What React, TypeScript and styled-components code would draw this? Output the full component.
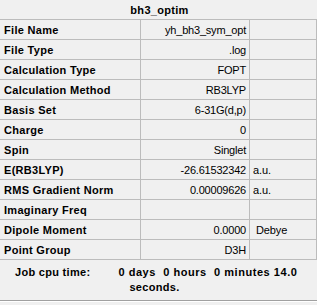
import styled, { createGlobalStyle } from 'styled-components'

const GlobalStyle = createGlobalStyle`
  html, body {
    margin: 0;
    padding: 0;
    background: #f0f0f0;
  }
`

type Row = { label: string; value: string; unit?: string }

const rows: Row[] = [
  { label: 'File Name', value: 'yh_bh3_sym_opt' },
  { label: 'File Type', value: '.log' },
  { label: 'Calculation Type', value: 'FOPT' },
  { label: 'Calculation Method', value: 'RB3LYP' },
  { label: 'Basis Set', value: '6-31G(d,p)' },
  { label: 'Charge', value: '0' },
  { label: 'Spin', value: 'Singlet' },
  { label: 'E(RB3LYP)', value: '-26.61532342', unit: 'a.u.' },
  { label: 'RMS Gradient Norm', value: '0.00009626', unit: 'a.u.' },
  { label: 'Imaginary Freq', value: '' },
  { label: 'Dipole Moment', value: '0.0000', unit: ' Debye' },
  { label: 'Point Group', value: 'D3H' },
]

export default function App() {
  return (
    <Panel>
      <GlobalStyle />
      <Title>bh3_optim</Title>

      {/* Summary table */}
      {rows.map((r) => (
        <TableRow key={r.label}>
          <Label>{r.label}</Label>
          <Value>{r.value}</Value>
          <Unit>{r.unit}</Unit>
        </TableRow>
      ))}

      {/* Job timing */}
      <Footer>
        <FooterLine>
          <span>Job cpu time:</span>
          <Duration>0 days  0 hours  0 minutes 14.0</Duration>
        </FooterLine>
        <FooterWrap>seconds.</FooterWrap>
      </Footer>
    </Panel>
  )
}

const Panel = styled.div`
  width: 317px;
  height: 305px;
  background: #f0f0f0;
  font-family: 'Liberation Sans', Arial, sans-serif;
  font-size: 11px;
  color: #000;
  overflow: hidden;
`

const Title = styled.div`
  box-sizing: border-box;
  height: 20px;
  border-bottom: 1px solid #bcbcbc;
  display: flex;
  align-items: center;
  justify-content: center;
  font-weight: bold;
  letter-spacing: 0.3px;
  padding-left: 2px;
`

const TableRow = styled.div`
  box-sizing: border-box;
  height: 20px;
  display: grid;
  grid-template-columns: 141px 109px 67px;
  border-bottom: 1px solid #bcbcbc;
`

const Cell = styled.div`
  box-sizing: border-box;
  display: flex;
  align-items: center;
  border-right: 1px solid #bcbcbc;
  white-space: pre;
  overflow: hidden;
`

const Label = styled(Cell)`
  padding-left: 4px;
  font-weight: bold;
  letter-spacing: 0.3px;
`

const Value = styled(Cell)`
  justify-content: flex-end;
  padding-right: 3px;
  letter-spacing: -0.2px;
`

const Unit = styled(Cell)`
  padding-left: 3px;
  letter-spacing: -0.1px;
`

const Footer = styled.div`
  box-sizing: border-box;
  height: 41px;
  padding-top: 5px;
  border-bottom: 1px solid #a0a0a0;
  box-shadow: 0 1px 0 #ffffff;
  font-weight: bold;
  letter-spacing: 0.3px;
`

const FooterLine = styled.div`
  display: flex;
  gap: 28px;
  padding-left: 15px;
  white-space: pre;
  line-height: 15px;
`

const Duration = styled.span`
  letter-spacing: 0.55px;
`

const FooterWrap = styled.div`
  text-align: center;
  padding-right: 8px;
  line-height: 15px;
`
